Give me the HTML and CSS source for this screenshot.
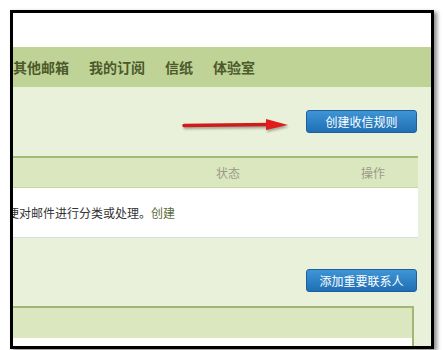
FILE: index.html
```html
<!DOCTYPE html>
<html lang="zh-cn">

<head>
  <meta charset="UTF-8">
  <title>收信规则</title>
  <link rel="stylesheet" href="styles.css">
</head>

<body>
  <div class="frame">
    <div class="top"></div>
    <div class="nav">
      <span>其他邮箱</span>
      <span>我的订阅</span>
      <span>信纸</span>
      <span>体验室</span>
    </div>

    <div class="main">
      <div class="toolbar">
        <svg class="arrow" width="110" height="16" viewBox="0 0 110 16">
          <path d="M2 8.5 L88 7.5" stroke="#d11a1a" stroke-width="3.5" stroke-linecap="round" />
          <path d="M84 2 L106 8 L84 13 Z" fill="#e01c1c" />
        </svg>
        <button class="btn">创建收信规则</button>
      </div>

      <div class="table">
        <div class="thead">
          <span class="col-state">状态</span>
          <span class="col-op">操作</span>
        </div>
        <div class="row">
          <p>便对邮件进行分类或处理。<a href="#">创建</a></p>
        </div>
      </div>

      <div class="toolbar second">
        <button class="btn">添加重要联系人</button>
      </div>

      <div class="box">
        <div class="box-head"></div>
        <div class="box-body"></div>
      </div>
    </div>
  </div>
</body>

</html>
```

FILE: styles.css
```css
html,
body {
  margin: 0;
  height: 100%;
  overflow: hidden;
  background: #fff;
  font-family: "Noto Sans CJK SC", "Liberation Sans", sans-serif;
}

.frame {
  margin: 10px 0 0 10px;
  width: 418px;
  height: 333px;
  border: 3px solid #000;
  box-shadow: 3px 2px 4px rgba(0, 0, 0, 0.45);
  overflow: hidden;
  background: #e9f1da;
}

.top {
  height: 34px;
  background: #fff;
}

.nav {
  height: 40px;
  background: #c0d396;
  display: flex;
  align-items: center;
  gap: 20px;
  font-size: 14px;
  font-weight: bold;
  color: #4c5a2b;
}

.main {
  position: relative;
}

.toolbar {
  height: 69px;
  display: flex;
  justify-content: flex-end;
  align-items: center;
  padding-right: 14px;
}

.arrow {
  position: absolute;
  left: 169px;
  top: 30px;
  filter: drop-shadow(1px 2px 1px rgba(0, 0, 0, 0.3));
}

.btn {
  width: 111px;
  height: 23px;
  padding: 0;
  border: 1px solid #1c5f9c;
  border-radius: 3px;
  background: linear-gradient(#3f95d6, #1f6fb4);
  color: #fff;
  font-family: inherit;
  font-size: 12px;
}

.table {
  margin-right: 13px;
  border-top: 2px solid #a6ba78;
}

.thead {
  height: 29px;
  background: #dae7bf;
  border-bottom: 1px solid #c4d6a4;
  position: relative;
  font-size: 12px;
  color: #9a9a8a;
  display: flex;
  align-items: center;
}

.col-state {
  margin-left: 203px;
}

.col-op {
  margin-left: 121px;
}

.row {
  height: 49px;
  background: #fff;
  border-bottom: 1px solid #d5dde3;
  display: flex;
  align-items: center;
  overflow: hidden;
}

.row p {
  margin: 0 0 0 -6px;
  font-size: 12px;
  color: #333;
  white-space: nowrap;
}

.row a {
  color: #5a6a3a;
  text-decoration: none;
}

.toolbar.second {
  height: 68px;
  align-items: flex-start;
  padding-top: 31px;
  box-sizing: border-box;
}

.box {
  margin-right: 17px;
  border-top: 2px solid #a3b674;
  border-right: 2px solid #a3b674;
}

.box-head {
  height: 30px;
  background: #dbe7bf;
}

.box-body {
  height: 10px;
  background: #fff;
}
```
